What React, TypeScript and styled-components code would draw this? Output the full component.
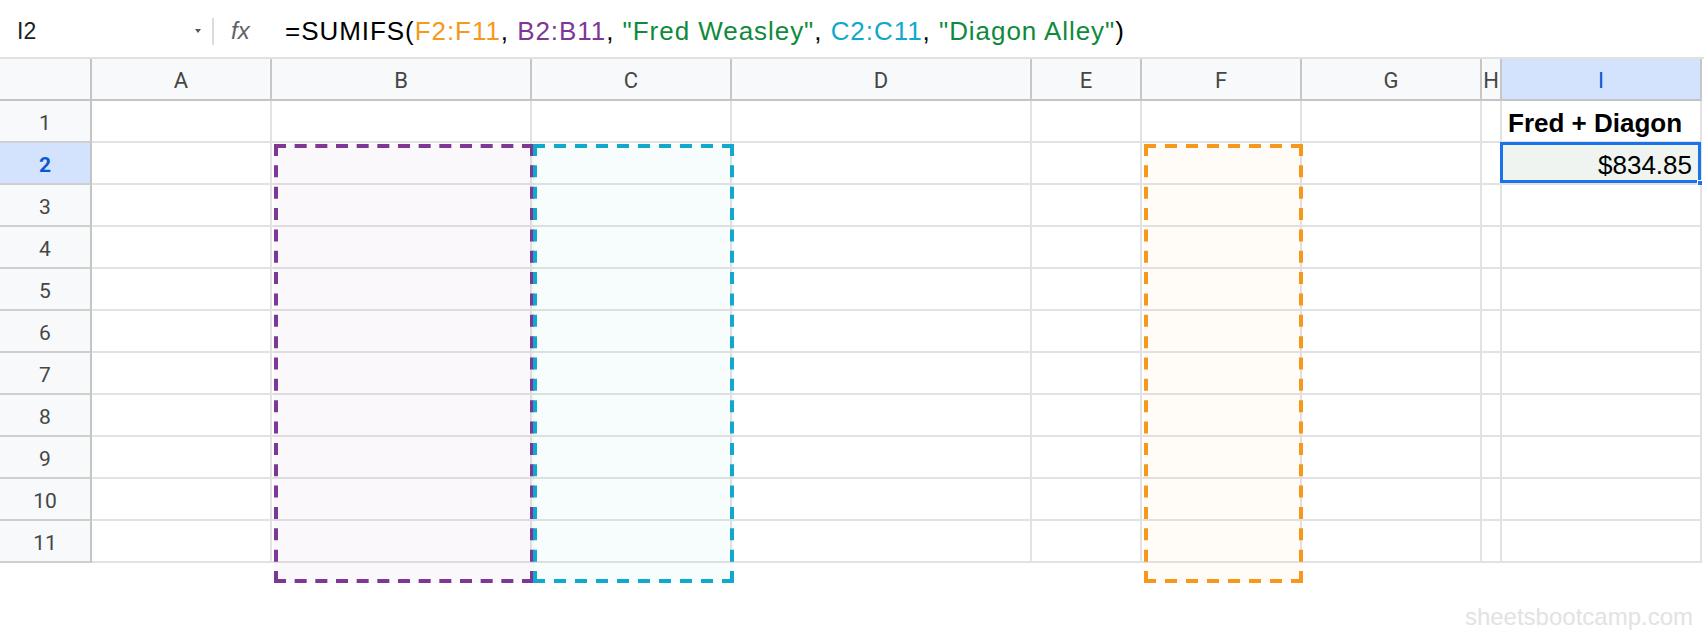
import React from "react";
import styled, { createGlobalStyle } from "styled-components";

const GlobalStyle = createGlobalStyle`
  html, body {
    margin: 0;
    padding: 0;
    background: #ffffff;
    overflow: hidden;
  }
  body {
    font-family: "Liberation Sans", Arial, sans-serif;
  }
  * { box-sizing: border-box; }
`;

const Page = styled.div`
  position: relative;
  width: 1704px;
  height: 634px;
  display: flex;
  flex-direction: column;
`;

const FormulaBar = styled.div`
  height: 59px;
  flex: 0 0 59px;
  border-bottom: 2px solid #e1e1e1;
  padding-top: 5px;
  display: flex;
  align-items: center;
`;

const NameBox = styled.div`
  width: 212px;
  padding: 0 11px 0 17px;
  display: flex;
  align-items: center;
  justify-content: space-between;
  font-size: 23px;
  color: #202124;
`;

const Caret = styled.span`
  width: 0;
  height: 0;
  border-left: 3.5px solid transparent;
  border-right: 3.5px solid transparent;
  border-top: 4px solid #555;
  margin-top: 0;
`;

const Separator = styled.div`
  width: 2px;
  height: 27px;
  background: #dadce0;
`;

const FxLabel = styled.div`
  width: 71px;
  padding: 0 0 0 17px;
  font-style: italic;
  font-size: 24px;
  color: #5f6368;
`;

const Formula = styled.div`
  font-size: 26px;
  letter-spacing: 0.95px;
  color: #000;
  white-space: nowrap;
`;

const Token = styled.span<{ $c: string }>`
  color: ${(p) => p.$c};
`;

const Grid = styled.div`
  display: grid;
  grid-template-columns: 92px 180px 260px 200px 300px 110px 160px 180px 20px 200px;
  grid-auto-rows: 42px;
  width: 1702px;
`;

const Corner = styled.div`
  background: #f8f9fa;
  border-right: 2px solid #c4c4c4;
  border-bottom: 2px solid #c4c4c4;
`;

const ColHeader = styled.div<{ $active?: boolean }>`
  background: ${(p) => (p.$active ? "#d3e3fd" : "#f8f9fa")};
  color: ${(p) => (p.$active ? "#0b57d0" : "#444746")};
  border-right: 2px solid #c7c7c7;
  border-bottom: 2px solid #c4c4c4;
  display: flex;
  align-items: center;
  justify-content: center;
  font-family: Roboto, "Liberation Sans", Arial, sans-serif;
  font-size: 22px;
  padding-top: 3px;
  overflow: visible;
`;

const RowHeader = styled.div<{ $active?: boolean }>`
  background: ${(p) => (p.$active ? "#d3e3fd" : "#f8f9fa")};
  color: ${(p) => (p.$active ? "#0b57d0" : "#444746")};
  font-weight: ${(p) => (p.$active ? 700 : 400)};
  border-right: 2px solid #c4c4c4;
  border-bottom: 2px solid #cfcfcf;
  display: flex;
  align-items: center;
  justify-content: center;
  font-family: Roboto, "Liberation Sans", Arial, sans-serif;
  font-size: 21px;
  padding-top: 4px;
`;

const Cell = styled.div<{ $bold?: boolean; $right?: boolean; $selected?: boolean }>`
  position: relative;
  border-right: 2px solid #e2e2e2;
  border-bottom: 2px solid #e2e2e2;
  display: flex;
  align-items: flex-end;
  justify-content: ${(p) => (p.$right ? "flex-end" : "flex-start")};
  padding: 0 8px 3px 6px;
  font-size: 26px;
  line-height: 30px;
  font-weight: ${(p) => (p.$bold ? 700 : 400)};
  color: #000;
  white-space: nowrap;
  background: ${(p) => (p.$selected ? "#eff4f0" : "transparent")};
`;

const SelectionFrame = styled.div`
  position: absolute;
  top: -1px;
  left: -2px;
  right: -1px;
  bottom: 0;
  border: 3px solid #1a73e8;
  pointer-events: none;
`;

const FillHandle = styled.div`
  position: absolute;
  right: -3px;
  bottom: -3px;
  width: 6px;
  height: 6px;
  background: #1a73e8;
  border: 1px solid #fff;
`;

const RangeBox = styled.div<{ $fill: string; $left: number; $width: number; $height: number }>`
  position: absolute;
  top: 144px;
  height: ${(p) => p.$height}px;
  left: ${(p) => p.$left}px;
  width: ${(p) => p.$width}px;
  background: ${(p) => p.$fill};
  pointer-events: none;
`;

const Outline = styled.svg`
  position: absolute;
  inset: 0;
  overflow: visible;
`;

const Footer = styled.div`
  flex: 1;
  display: flex;
  justify-content: flex-end;
  align-items: flex-start;
  padding: 40px 11px 0 0;
  font-size: 24px;
  line-height: 28px;
  color: #e2e2e2;
`;

const COLUMNS = ["A", "B", "C", "D", "E", "F", "G", "H", "I"];
const ORANGE = "#f7981d";
const PURPLE = "#7e3794";
const GREEN = "#0f8a3c";
const CYAN = "#11a8cd";

const DASH = 12;
const GAP = 9;
const STROKE = 4;

function dashArray(len: number) {
  const k = Math.max(2, Math.round((len + GAP) / (DASH + GAP)));
  const gap = (len - k * DASH) / (k - 1);
  return `${DASH} ${gap}`;
}

function Range({
  left,
  width,
  height,
  color,
  fill,
}: {
  left: number;
  width: number;
  height: number;
  color: string;
  fill: string;
}) {
  const h = STROKE / 2;
  return (
    <RangeBox $left={left} $width={width} $height={height} $fill={fill}>
      <Outline width={width} height={height} viewBox={`0 0 ${width} ${height}`}>
        <g stroke={color} strokeWidth={STROKE} fill="none">
          <line x1={0} y1={h} x2={width} y2={h} strokeDasharray={dashArray(width)} />
          <line x1={0} y1={height - h} x2={width} y2={height - h} strokeDasharray={dashArray(width)} />
          <line x1={h} y1={0} x2={h} y2={height} strokeDasharray={dashArray(height)} />
          <line x1={width - h} y1={0} x2={width - h} y2={height} strokeDasharray={dashArray(height)} />
        </g>
      </Outline>
    </RangeBox>
  );
}

export default function App() {
  const rows = Array.from({ length: 11 }, (_, i) => i + 1);
  return (
    <Page>
      <GlobalStyle />
      <FormulaBar>
        <NameBox>
          <span>I2</span>
          <Caret />
        </NameBox>
        <Separator />
        <FxLabel>fx</FxLabel>
        <Formula>
          =SUMIFS(<Token $c={ORANGE}>F2:F11</Token>, <Token $c={PURPLE}>B2:B11</Token>,{" "}
          <Token $c={GREEN}>"Fred Weasley"</Token>, <Token $c={CYAN}>C2:C11</Token>,{" "}
          <Token $c={GREEN}>"Diagon Alley"</Token>)
        </Formula>
      </FormulaBar>
      <Grid>
        <Corner />
        {COLUMNS.map((c) => (
          <ColHeader key={c} $active={c === "I"}>
            {c}
          </ColHeader>
        ))}
        {rows.map((r) => (
          <React.Fragment key={r}>
            <RowHeader $active={r === 2}>{r}</RowHeader>
            {COLUMNS.map((c) => {
              if (c === "I" && r === 1) {
                return (
                  <Cell key={c} $bold>
                    Fred + Diagon
                  </Cell>
                );
              }
              if (c === "I" && r === 2) {
                return (
                  <Cell key={c} $right $selected>
                    $834.85
                    <SelectionFrame />
                    <FillHandle />
                  </Cell>
                );
              }
              return <Cell key={c} />;
            })}
          </React.Fragment>
        ))}
      </Grid>
      <Footer>sheetsbootcamp.com</Footer>
      <Range left={274} width={260} height={439} color={PURPLE} fill="rgba(126,55,148,0.035)" />
      <Range left={533} width={201} height={439} color={CYAN} fill="rgba(17,185,190,0.035)" />
      <Range left={1144} width={159} height={439} color={ORANGE} fill="rgba(247,152,29,0.035)" />
    </Page>
  );
}
